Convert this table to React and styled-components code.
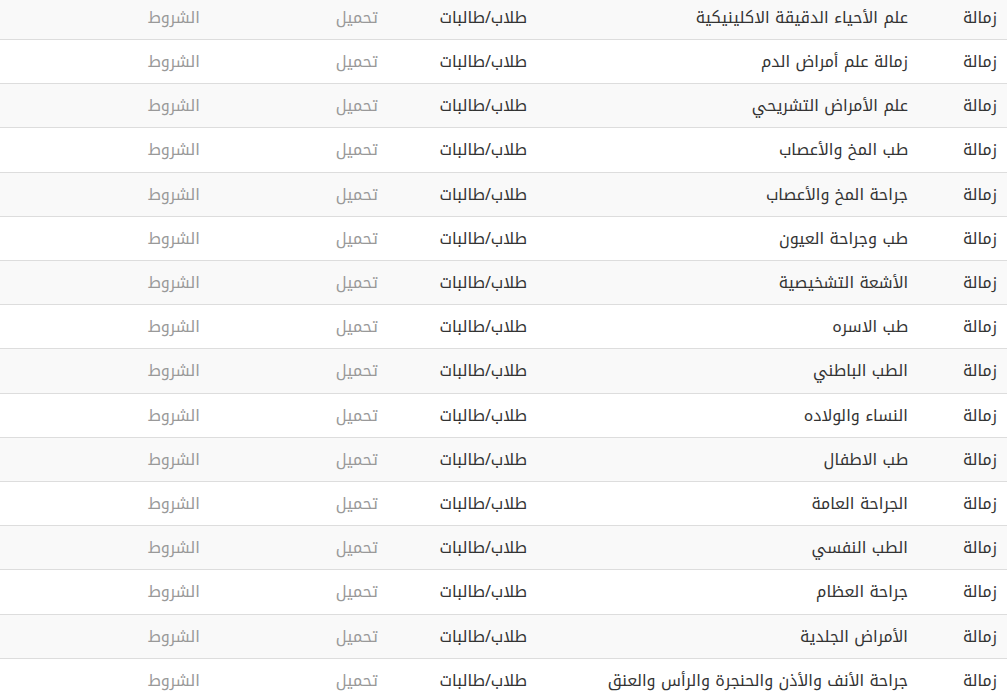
import React from "react";
import styled, { createGlobalStyle } from "styled-components";

const Global = createGlobalStyle`
  html, body { margin: 0; padding: 0; background: #fff; }
  body { font-family: "Noto Kufi Arabic", "Noto Sans", sans-serif; overflow: hidden; }
`;

const Table = styled.table`
  width: 1007px;
  border-collapse: collapse;
  direction: rtl;
  margin-top: -5.2px;
  font-size: 16px;
  color: #333;
`;

const Row = styled.tr`
  background: ${(p) => (p.$striped ? "#f9f9f9" : "#fff")};
`;

const Cell = styled.td`
  padding: 10px;
  height: 23.2px;
  line-height: 23.2px;
  text-align: right;
  vertical-align: middle;
  border-top: 1px solid #ddd;
  white-space: nowrap;
  width: ${(p) => p.$w || "auto"};
  color: ${(p) => (p.$muted ? "#999" : "#333")};
`;

const names = [
  "علم الأحياء الدقيقة الاكلينيكية",
  "زمالة علم أمراض الدم",
  "علم الأمراض التشريحي",
  "طب المخ والأعصاب",
  "جراحة المخ والأعصاب",
  "طب وجراحة العيون",
  "الأشعة التشخيصية",
  "طب الاسره",
  "الطب الباطني",
  "النساء والولاده",
  "طب الاطفال",
  "الجراحة العامة",
  "الطب النفسي",
  "جراحة العظام",
  "الأمراض الجلدية",
  "جراحة الأنف والأذن والحنجرة والرأس والعنق",
];

export default function App() {
  return (
    <>
      <Global />
      <Table>
        <tbody>
          {names.map((n, i) => (
            <Row key={i} $striped={i % 2 === 0}>
              <Cell $w="69px">زمالة</Cell>
              <Cell $w="361px">{n}</Cell>
              <Cell $w="129px">طلاب/طالبات</Cell>
              <Cell $w="158px" $muted>تحميل</Cell>
              <Cell $muted>الشروط</Cell>
            </Row>
          ))}
        </tbody>
      </Table>
    </>
  );
}
